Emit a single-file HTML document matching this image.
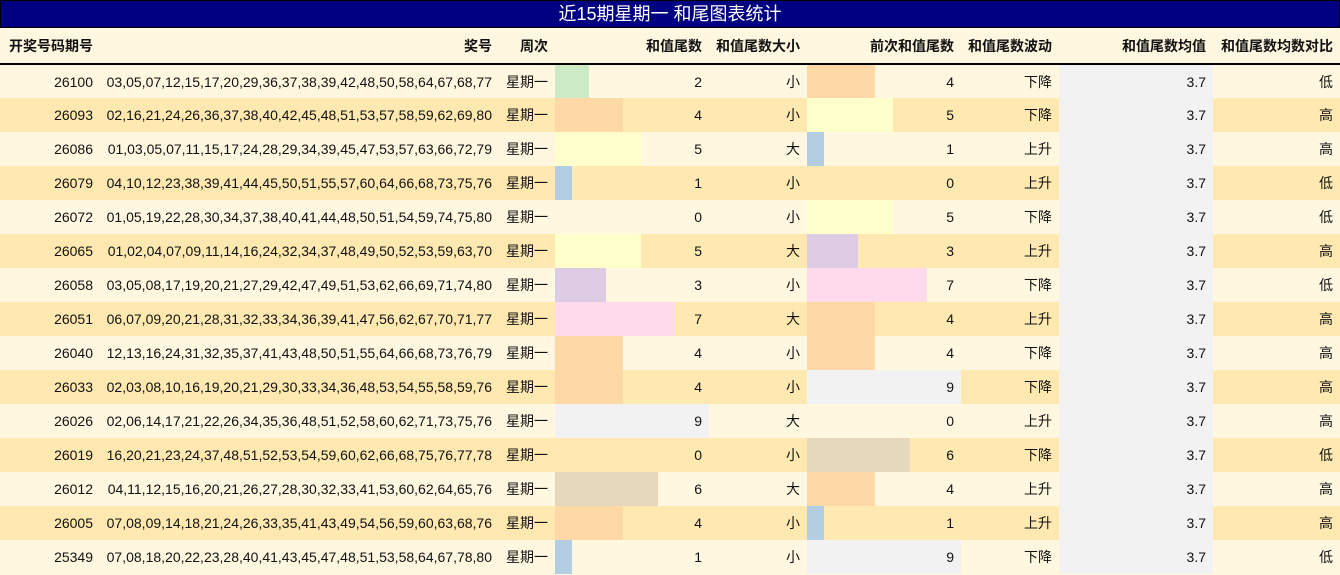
<!DOCTYPE html>
<html><head><meta charset="utf-8"><style>
*{margin:0;padding:0;box-sizing:border-box}
body{width:1340px;height:575px;background:#fff7e0;font-family:"Liberation Sans","Noto Sans CJK SC",sans-serif;font-size:14px;color:#111;overflow:hidden}
.title{height:28px;background:#000080;border:1px solid #000;color:#fff;text-align:center;font-size:18px;line-height:26px}
table{border-collapse:collapse;table-layout:fixed;width:1340px}
th{height:36px;font-weight:bold;text-align:right;padding-right:7px;border-bottom:2px solid #000;background:#fff7e0;white-space:nowrap}
td{height:34px;text-align:right;padding-right:7px;white-space:nowrap}
tr.o td{background-color:#fff7e0}
tr.e td{background-color:#ffe9b0}
td.g{background:#f2f2f2 !important}
</style></head><body>
<div class="title">近15期星期一 和尾图表统计</div>
<table>
<colgroup><col style="width:100px"><col style="width:399px"><col style="width:56px"><col style="width:154px"><col style="width:98px"><col style="width:154px"><col style="width:98px"><col style="width:154px"><col style="width:127px"></colgroup>
<tr><th>开奖号码期号</th><th>奖号</th><th>周次</th><th>和值尾数</th><th>和值尾数大小</th><th>前次和值尾数</th><th>和值尾数波动</th><th>和值尾数均值</th><th>和值尾数均数对比</th></tr>
<tbody id="b"></tbody>
</table>
<script>
var c=['#fbb4ae','#b3cde3','#ccebc5','#decbe4','#fed9a6','#ffffcc','#e5d8bd','#fddaec','#f2f2f2','#f2f2f2'];
var d=[
['26100','03,05,07,12,15,17,20,29,36,37,38,39,42,48,50,58,64,67,68,77',2,'小',4,'下降','低'],
['26093','02,16,21,24,26,36,37,38,40,42,45,48,51,53,57,58,59,62,69,80',4,'小',5,'下降','高'],
['26086','01,03,05,07,11,15,17,24,28,29,34,39,45,47,53,57,63,66,72,79',5,'大',1,'上升','高'],
['26079','04,10,12,23,38,39,41,44,45,50,51,55,57,60,64,66,68,73,75,76',1,'小',0,'上升','低'],
['26072','01,05,19,22,28,30,34,37,38,40,41,44,48,50,51,54,59,74,75,80',0,'小',5,'下降','低'],
['26065','01,02,04,07,09,11,14,16,24,32,34,37,48,49,50,52,53,59,63,70',5,'大',3,'上升','高'],
['26058','03,05,08,17,19,20,21,27,29,42,47,49,51,53,62,66,69,71,74,80',3,'小',7,'下降','低'],
['26051','06,07,09,20,21,28,31,32,33,34,36,39,41,47,56,62,67,70,71,77',7,'大',4,'上升','高'],
['26040','12,13,16,24,31,32,35,37,41,43,48,50,51,55,64,66,68,73,76,79',4,'小',4,'下降','高'],
['26033','02,03,08,10,16,19,20,21,29,30,33,34,36,48,53,54,55,58,59,76',4,'小',9,'下降','高'],
['26026','02,06,14,17,21,22,26,34,35,36,48,51,52,58,60,62,71,73,75,76',9,'大',0,'上升','高'],
['26019','16,20,21,23,24,37,48,51,52,53,54,59,60,62,66,68,75,76,77,78',0,'小',6,'下降','低'],
['26012','04,11,12,15,16,20,21,26,27,28,30,32,33,41,53,60,62,64,65,76',6,'大',4,'上升','高'],
['26005','07,08,09,14,18,21,24,26,33,35,41,43,49,54,56,59,60,63,68,76',4,'小',1,'上升','高'],
['25349','07,08,18,20,22,23,28,40,41,43,45,47,48,51,53,58,64,67,78,80',1,'小',9,'下降','低']];
function bar(v,bg){var w=Math.round(v*154/9);if(v==0)return '';return 'background:linear-gradient(to right,'+c[v]+' '+w+'px,'+bg+' '+w+'px) !important';}
var h='';d.forEach(function(r,i){var bg=i%2?'#ffe9b0':'#fff7e0';
h+='<tr class="'+(i%2?'e':'o')+'"><td>'+r[0]+'</td><td>'+r[1]+'</td><td>星期一</td><td style="'+bar(r[2],bg)+'">'+r[2]+'</td><td>'+r[3]+'</td><td style="'+bar(r[4],bg)+'">'+r[4]+'</td><td>'+r[5]+'</td><td class="g">3.7</td><td>'+r[6]+'</td></tr>';});
document.getElementById('b').innerHTML=h;
</script>
</body></html>
